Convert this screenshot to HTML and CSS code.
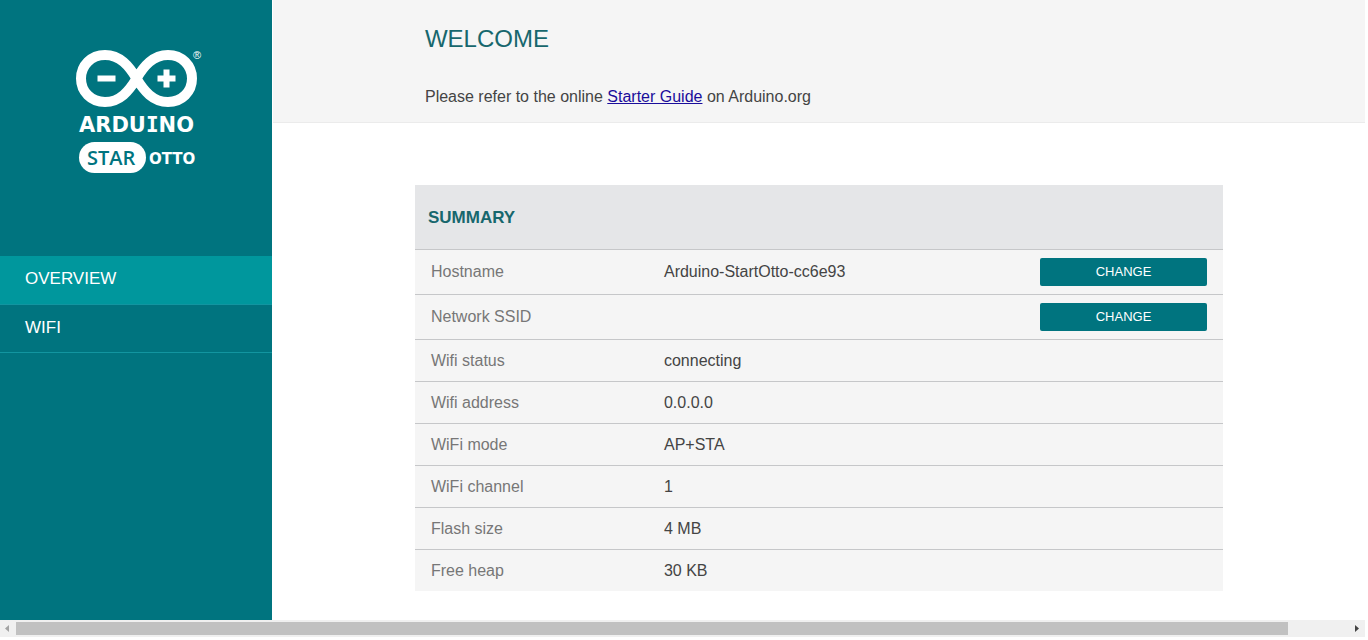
FILE: index.html
```html
<!DOCTYPE html>
<html lang="en">
<head>
<meta charset="utf-8">
<title>Arduino Star Otto</title>
<link rel="stylesheet" href="styles.css">
</head>
<body>
<div class="app">
  <aside class="sidebar">
    <svg class="logo" viewBox="72 44 134 134" role="img" aria-label="Arduino Star Otto">
      <path class="loop" d="M136.5 78.5C129 66 120 55 105 55C91 55 81 65.5 81 78.5S91 102 105 102C120 102 129 91 136.5 78.5C144 66 153 55 168 55C182 55 192 65.5 192 78.5S182 102 168 102C153 102 144 91 136.5 78.5Z"/>
      <path class="sign" d="M97.5 78.5H115.5M157.5 78.5H175.5M166.500 69.5V87.5"/>
      <text class="mark" x="193" y="59">®</text>
      <text class="brand" x="79" y="132">ARDU<tspan class="slab">I</tspan>NO</text>
      <rect class="pill" x="79" y="142" width="67" height="31" rx="15.5"/>
      <text class="star" x="87" y="165">STAR</text>
      <text class="otto" x="149" y="164">OTTO</text>
    </svg>
    <nav class="menu">
      <a class="item active" href="#overview">OVERVIEW</a>
      <a class="item" href="#wifi">WIFI</a>
    </nav>
  </aside>
  <main class="main">
    <header class="intro">
      <div class="inner">
        <h1 class="title">WELCOME</h1>
        <p class="lead">Please refer to the online <a class="guide" href="#guide">Starter Guide</a> on Arduino.org</p>
      </div>
    </header>
    <section class="summary">
      <h2 class="heading">SUMMARY</h2>
      <table class="facts">
        <tr><th scope="row">Hostname</th><td>Arduino-StartOtto-cc6e93</td><td class="action"><button class="change" type="button">CHANGE</button></td></tr>
        <tr><th scope="row">Network SSID</th><td></td><td class="action"><button class="change" type="button">CHANGE</button></td></tr>
        <tr><th scope="row">Wifi status</th><td colspan="2">connecting</td></tr>
        <tr><th scope="row">Wifi address</th><td colspan="2">0.0.0.0</td></tr>
        <tr><th scope="row">WiFi mode</th><td colspan="2">AP+STA</td></tr>
        <tr><th scope="row">WiFi channel</th><td colspan="2">1</td></tr>
        <tr><th scope="row">Flash size</th><td colspan="2">4 MB</td></tr>
        <tr><th scope="row">Free heap</th><td colspan="2">30 KB</td></tr>
      </table>
    </section>
  </main>
</div>
<div class="scrollbar">
  <button class="arrow" type="button" aria-label="Scroll left"><svg viewBox="0 0 16 17"><path fill="#a3a3a3" d="M9 5v7L5 8.500z"/></svg></button>
  <div class="track"><div class="thumb"></div></div>
  <button class="arrow" type="button" aria-label="Scroll right"><svg viewBox="0 0 16 17"><path fill="#444" d="M6 5v7l4-3.500z"/></svg></button>
</div>
</body>
</html>
```
FILE: styles.css
```css
* { box-sizing: border-box; }
body {
  margin: 0;
  min-height: 100vh;
  padding: 0 3px 3px 0;
  display: flex;
  flex-direction: column;
  background: #fff;
  color: #444;
  font: 16px/20px "Liberation Sans", Arial, sans-serif;
}
.app { flex: 1; display: flex; gap: 1px; }
.sidebar { width: 272px; flex: none; background: #00747f; color: #fff; padding-top: 44px; }
.logo { display: block; width: 134px; height: 134px; margin-left: 72px; fill: #fff; }
.loop { fill: none; stroke: #fff; stroke-width: 10; }
.sign { fill: none; stroke: #fff; stroke-width: 6; }
.mark { font-size: 11px; }
.brand { font: bold 21px "DejaVu Sans", sans-serif; }
.slab { font-family: "DejaVu Sans Mono", monospace; }
.star { font: 600 20px "Open Sans", sans-serif; fill: #00747f; }
.otto { font: bold 15px "DejaVu Sans", sans-serif; }
.menu { margin-top: 78px; }
.item {
  display: block;
  height: 48px;
  padding: 13px 25px;
  border-bottom: 1px solid #1295a0;
  color: #fff;
  font-size: 17px;
  text-decoration: none;
}
.active { height: 49px; background: #00979d; }
.main { flex: 1; min-width: 0; }
.intro { background: #f5f5f5; border-bottom: 1px solid #ebebeb; padding: 24px 0 15px; }
.inner, .summary { width: 74%; margin: 0 auto; }
.inner { padding-left: 10px; }
.title { margin: 0 0 33px; color: #17676d; font-size: 24px; line-height: 30px; font-weight: normal; }
.lead { margin: 0; }
.guide { color: #1a0d9b; }
.summary { margin-top: 62px; }
.heading {
  margin: 0;
  padding: 23px 13px 21px;
  background: #e5e6e8;
  color: #17676d;
  font-size: 17px;
  line-height: 20px;
}
.facts { width: 100%; border-collapse: separate; border-spacing: 0; table-layout: fixed; background: #f5f5f5; }
.facts th, .facts td { height: 42px; padding: 0 16px; border-top: 1px solid #c6c7c9; text-align: left; font-weight: normal; }
.facts th { width: 233px; color: #777; }
.facts .action { width: 199px; padding: 8px 16px; }
.change {
  display: block;
  width: 100%;
  height: 28px;
  padding: 0;
  border: 0;
  border-radius: 2px;
  background: #00747f;
  color: #fff;
  font: 13px/28px "Liberation Sans", Arial, sans-serif;
}
.scrollbar { height: 17px; display: flex; background: #f0f0f0; }
.arrow { width: 16px; height: 17px; padding: 0; border: 0; background: none; }
.arrow svg { display: block; width: 16px; height: 17px; }
.track { flex: 1; padding: 2px 0; }
.thumb { width: 95.400%; height: 13px; background: #c1c1c1; }
```
